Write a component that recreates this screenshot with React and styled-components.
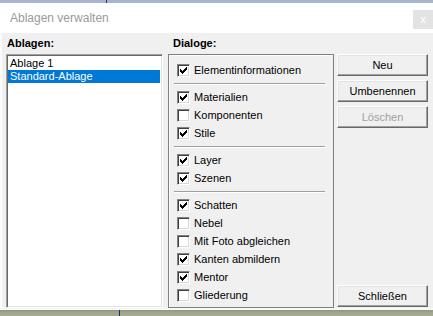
import React from 'react';
import styled, { createGlobalStyle } from 'styled-components';

const GlobalStyle = createGlobalStyle`
  html, body {
    margin: 0;
    padding: 0;
    background: #a4ab8e;
  }
  body {
    width: 433px;
    height: 316px;
    overflow: hidden;
    font-family: "Liberation Sans", Arial, sans-serif;
  }
`;

const Screen = styled.div`
  width: 433px;
  height: 316px;
  display: flex;
  flex-direction: column;
`;

const TopStrip = styled.div`
  height: 3px;
  background: linear-gradient(to right, #a7b5ca 106px, #1b2d8c 106px, #1b2d8c 107px, #a7b5ca 107px);
`;

const BottomStrip = styled.div`
  flex: 1;
  background:
    linear-gradient(to right, transparent 119px, #1b2d8c 119px, #1b2d8c 120px, transparent 120px),
    linear-gradient(to bottom, #8f977b 0, #a2a98c 3px);
`;

const Window = styled.div`
  height: 307px;
  display: flex;
  flex-direction: column;
  background: #fff;
`;

const TitleBar = styled.div`
  height: 30px;
  display: flex;
  align-items: center;
  justify-content: space-between;
  padding-left: 10px;
  box-sizing: border-box;
`;

const Title = styled.span`
  font-size: 12px;
  color: #9a9a9a;
`;

const CloseBox = styled.div`
  width: 20px;
  height: 19px;
  margin-top: 2px;
  background: #e3e3e3;
  color: #f8f8f8;
  font-size: 11px;
  font-weight: bold;
  display: flex;
  align-items: center;
  justify-content: center;
`;

const Body = styled.div`
  flex: 1;
  background: #f0f0f0;
  border-left: 2px solid #fbfbfb;
  border-bottom: 2px solid #f7f7f7;
  padding: 4px 0 0 4px;
  display: grid;
  grid-template-columns: 162px 169px 91px;
  grid-template-rows: 13px 1fr;
  row-gap: 4px;
`;

const Label = styled.div`
  font-size: 11px;
  line-height: 13px;
  font-weight: bold;
  color: #000;
  padding-left: ${p => p.$indent || 1}px;
  grid-column: ${p => p.$span || 'auto'};
`;

const ListBox = styled.div`
  width: 157px;
  background: #fff;
  border: 1px solid;
  border-color: #a0a0a0 #ffffff #ffffff #a0a0a0;
  box-shadow: inset 1px 1px 0 #696969, inset -1px -1px 0 #e3e3e3;
  padding: 2px 2px 2px 1px;
  box-sizing: border-box;
`;

const ListItem = styled.div`
  height: 13px;
  line-height: 13px;
  font-size: 11px;
  padding-left: 2px;
  color: ${p => (p.$selected ? '#fff' : '#000')};
  background: ${p => (p.$selected ? '#0078d7' : 'transparent')};
`;

const GroupBox = styled.div`
  width: 166px;
  border: 1px solid #7f7f7f;
  box-shadow: inset 1px 1px 0 #fdfdfd;
  padding: 6px 0 0 8px;
  box-sizing: border-box;
`;

const Row = styled.div`
  height: 18px;
  display: flex;
  align-items: center;
  font-size: 11px;
  color: #000;
`;

const Box = styled.span`
  width: 13px;
  height: 13px;
  box-sizing: border-box;
  background: #fff;
  border: 1px solid;
  border-color: #828282 #ffffff #ffffff #828282;
  box-shadow: inset 1px 1px 0 #3f3f3f, inset -1px -1px 0 #d8d8d8;
  display: flex;
  align-items: center;
  justify-content: center;
  margin-right: 4px;
  flex-shrink: 0;
`;

const Separator = styled.div`
  height: 1px;
  margin: 4px 8px 3px -3px;
  background: #a0a0a0;
  border-bottom: 1px solid #fff;
`;

const ButtonColumn = styled.div`
  display: flex;
  flex-direction: column;
  gap: 4px;
  padding-bottom: 1px;
`;

const Button = styled.div`
  height: 22px;
  box-sizing: border-box;
  background: #f0f0f0;
  border: 1px solid;
  border-color: #ffffff #696969 #696969 #ffffff;
  box-shadow: inset -1px -1px 0 #a0a0a0, inset 1px 1px 0 #e3e3e3;
  display: flex;
  align-items: center;
  justify-content: center;
  font-size: 11px;
  color: ${p => (p.$disabled ? '#a0a0a0' : '#000')};
  margin-top: ${p => (p.$bottom ? 'auto' : '0')};
`;

const CHECK = [
  '......#',
  '.....##',
  '#...###',
  '##.###.',
  '#####..',
  '.###...',
  '..#....',
];

const CheckMark = () => (
  <svg width="7" height="7" viewBox="0 0 7 7" shapeRendering="crispEdges">
    {CHECK.map((line, y) =>
      line.split('').map((c, x) =>
        c === '#' ? <rect key={`${x}-${y}`} x={x} y={y} width="1" height="1" fill="#000" /> : null
      )
    )}
  </svg>
);

const sections = [
  [['Elementinformationen', true]],
  [['Materialien', true], ['Komponenten', false], ['Stile', true]],
  [['Layer', true], ['Szenen', true]],
  [
    ['Schatten', true],
    ['Nebel', false],
    ['Mit Foto abgleichen', false],
    ['Kanten abmildern', true],
    ['Mentor', true],
    ['Gliederung', false],
  ],
];

const App = () => (
  <>
    <GlobalStyle />
    <Screen>
      <TopStrip />
      <Window>
        <TitleBar>
          <Title>Ablagen verwalten</Title>
          <CloseBox>x</CloseBox>
        </TitleBar>
        <Body>
          <Label>Ablagen:</Label>
          <Label $indent={5} $span="span 2">Dialoge:</Label>
          <ListBox>
            <ListItem>Ablage 1</ListItem>
            <ListItem $selected>Standard-Ablage</ListItem>
          </ListBox>
          <GroupBox>
            {sections.map((items, i) => (
              <React.Fragment key={i}>
                {i > 0 && <Separator />}
                {items.map(([name, checked]) => (
                  <Row key={name}>
                    <Box>{checked && <CheckMark />}</Box>
                    {name}
                  </Row>
                ))}
              </React.Fragment>
            ))}
          </GroupBox>
          <ButtonColumn>
            <Button>Neu</Button>
            <Button>Umbenennen</Button>
            <Button $disabled>Löschen</Button>
            <Button $bottom>Schließen</Button>
          </ButtonColumn>
        </Body>
      </Window>
      <BottomStrip />
    </Screen>
  </>
);

export default App;
